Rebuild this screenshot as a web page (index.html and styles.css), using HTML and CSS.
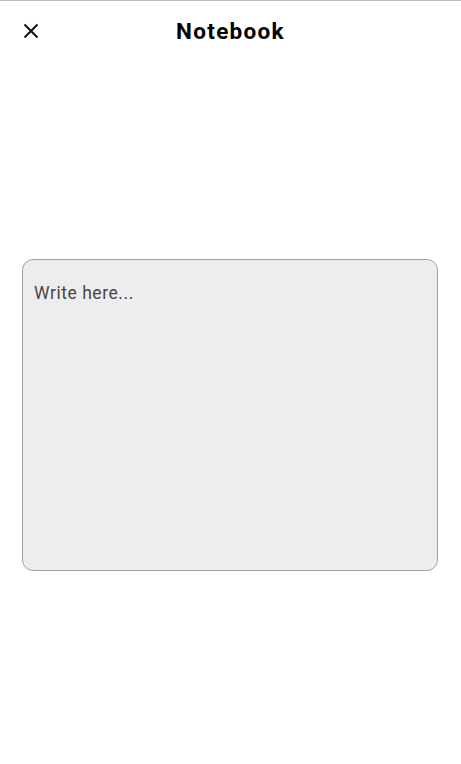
FILE: index.html
```html
<!DOCTYPE html>
<html lang="en">
<head>
<meta charset="utf-8">
<title>Notebook</title>
<link rel="stylesheet" href="styles.css">
</head>
<body>
<div class="app">
  <header class="topbar">
    <button class="close" aria-label="Close">
      <svg width="16" height="16" viewBox="0 0 16 16"><path d="M1.5 1.5 L14.5 14.5 M14.5 1.5 L1.5 14.5" stroke="#111" stroke-width="2" fill="none"/></svg>
    </button>
    <h1 class="title">Notebook</h1>
    <span class="spacer"></span>
  </header>
  <main class="content">
    <div class="note" contenteditable="true"><span class="placeholder">Write here...</span></div>
  </main>
</div>
</body>
</html>
```
FILE: styles.css
```css
html, body {
  margin: 0;
  padding: 0;
  background: #ffffff;
  font-family: Roboto, "Noto Sans", Arial, sans-serif;
}
.app {
  border-top: 1px solid #b9bdc4;
  min-height: 763px;
  display: flex;
  flex-direction: column;
}
.topbar {
  display: grid;
  grid-template-columns: 60px 1fr 60px;
  align-items: center;
  height: 60px;
}
.close {
  border: none;
  background: none;
  padding: 0;
  margin-left: 23px;
  width: 16px;
  height: 16px;
  display: flex;
  cursor: pointer;
}
.title {
  margin: 0;
  text-align: center;
  font-size: 22.5px;
  font-weight: 700;
  letter-spacing: 1.3px;
  color: #000;
}
.content {
  padding: 198px 23px 0 22px;
}
.note {
  height: 312px;
  background: #ededed;
  border: 1px solid #a3a3a3;
  border-radius: 11px;
  padding: 23px 11px;
  box-sizing: border-box;
  outline: none;
}
.placeholder {
  font-size: 17.5px;
  letter-spacing: 0.55px;
  color: #484848;
}
```
